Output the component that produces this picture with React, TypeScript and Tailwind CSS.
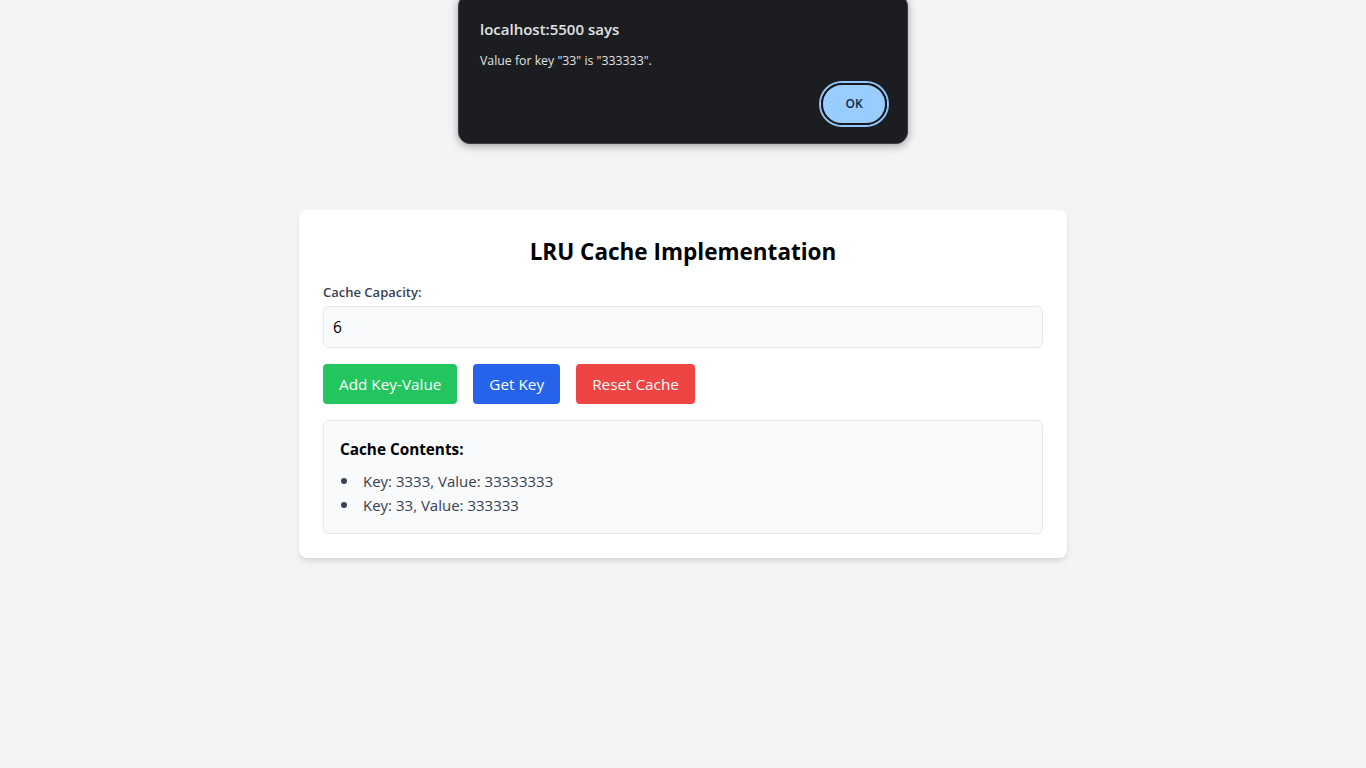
import React from 'react';

const entries = [
  { key: '3333', value: '33333333' },
  { key: '33', value: '333333' },
];

function AlertDialog() {
  return (
    <div className="absolute left-[458px] top-[-6px] w-[450px] h-[150px] rounded-[12px] bg-[#1b1d21] border border-[#3a3c40] shadow-[0_2px_8px_rgba(0,0,0,0.35)] px-[21px] pt-[24px]">
      <div className="text-[15px] font-semibold text-[#e3e3e3] leading-[20px]">localhost:5500 says</div>
      <div className="mt-[14px] text-[12.3px] text-[#e3e3e3] leading-[16px]">Value for key "33" is "333333".</div>
      <div className="flex justify-end mt-[12px] -mr-[3px]">
        <div className="rounded-full border-2 border-[#8ec8ff]">
          <button className="h-[42px] w-[66px] rounded-full border-2 border-[#17191c] bg-[#99ccff] text-[12px] font-semibold text-[#0b2a4a]">
            OK
          </button>
        </div>
      </div>
    </div>
  );
}

export default function App() {
  return (
    <div className="relative min-h-screen bg-[#f3f4f6] flex items-center justify-center font-['Open_Sans',sans-serif]">
      <AlertDialog />
      <div className="w-[768px] bg-white rounded-lg shadow-md p-6">
        <h1 className="text-center text-[22.5px] font-bold text-black leading-[32px] mt-[2px] mb-[14px]">LRU Cache Implementation</h1>
        <label className="block text-[13px] font-semibold text-[#374151] leading-[20px] mb-[4px]">Cache Capacity:</label>
        <input
          type="number"
          defaultValue={6}
          className="block w-full h-[42px] px-[9px] bg-[#f9fafb] border border-[#e5e7eb] rounded-md text-[15.5px] text-black outline-none"
        />
        <div className="flex gap-4 mt-4">
          <button className="h-10 px-4 rounded bg-[#22c55e] text-white text-[15.3px]">Add Key-Value</button>
          <button className="h-10 px-4 rounded bg-[#2563eb] text-white text-[15.3px]">Get Key</button>
          <button className="h-10 px-4 rounded bg-[#ef4444] text-white text-[15.3px]">Reset Cache</button>
        </div>
        <div className="mt-4 bg-[#f9fafb] border border-[#e5e7eb] rounded-md px-4 pt-4 pb-4">
          <h2 className="text-[15.3px] font-bold text-black leading-[24px] mb-[8px]">Cache Contents:</h2>
          <ul className="text-[#374151] text-[15px] leading-[24px]">
            {entries.map((e) => (
              <li key={e.key} className="flex items-center">
                <span className="w-[6px] h-[6px] rounded-full bg-[#374151] ml-[1px] mr-[16px]" />
                <span>
                  Key: {e.key}, Value: {e.value}
                </span>
              </li>
            ))}
          </ul>
        </div>
      </div>
    </div>
  );
}
